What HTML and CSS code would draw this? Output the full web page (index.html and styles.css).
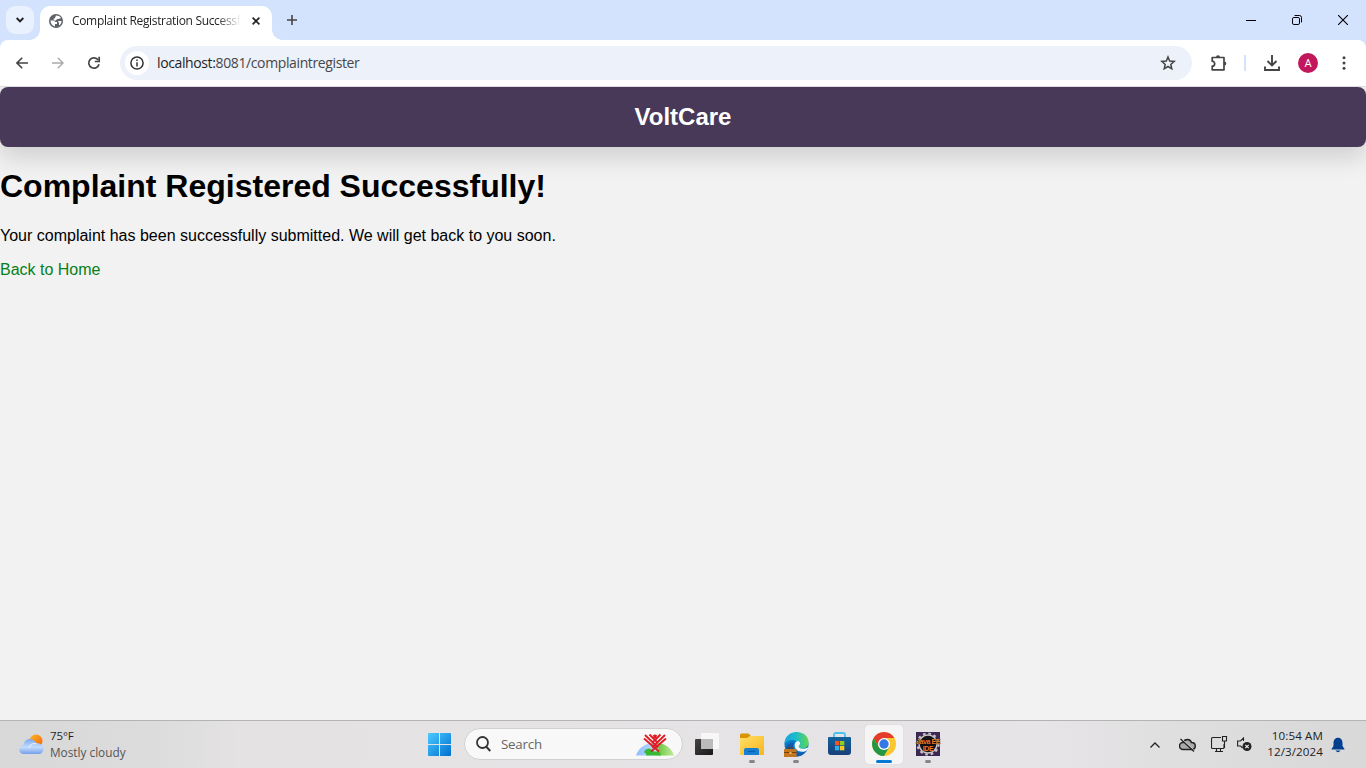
FILE: index.html
```html
<!DOCTYPE html>
<html lang="en">
<head>
<meta charset="utf-8">
<title>Complaint Registration Success</title>
<link rel="stylesheet" href="styles.css">
</head>
<body>
<div class="screen">
  <header class="tabs">
    <button class="tab-search"><svg width="8" height="6" viewBox="0 0 8 6"><path d="M.7 1L4 4.300 7.300 1" fill="none" stroke="#1f1f1f" stroke-width="1.900"/></svg></button>
    <div class="tab">
      <svg class="globe" width="14" height="14" viewBox="0 0 14 14"><circle cx="7" cy="7" r="7" fill="#5f6368"/><path d="M7 1.500c2 0 4 .7 5 2.500L9.500 5H8L7 6.500H5L4.500 5 6 4zM1.500 6.500h3L6.500 8H8v2H6v2.400C3.500 12 1.500 10 1.500 6.500zM9 7h3.500c0 2-1 3.500-2.500 4.500V9z" fill="#fff"/></svg>
      <span class="tab-title">Complaint Registration Successf</span>
      <svg width="8" height="8" viewBox="0 0 8 8"><path d="M.6.6l6.800 6.800M7.400.6L.6 7.400" stroke="#1f1f1f" stroke-width="1.600"/></svg>
    </div>
    <svg class="new-tab" width="10" height="10" viewBox="0 0 10 10"><path d="M5 0v10M0 5h10" stroke="#444" stroke-width="1.600"/></svg>
    <div class="window-controls">
      <span><svg width="10" height="10" viewBox="0 0 10 10"><path d="M0 5.500h10" stroke="#000"/></svg></span>
      <span><svg width="10" height="10" viewBox="0 0 10 10"><rect x=".5" y="2.500" width="7" height="7" rx="1.400" fill="none" stroke="#000"/><path d="M2.600.5h4.900a2 2 0 0 1 2 2v4.900" fill="none" stroke="#000"/></svg></span>
      <span><svg width="10" height="10" viewBox="0 0 10 10"><path d="M0 0l10 10M10 0L0 10" stroke="#000" stroke-width="1.100"/></svg></span>
    </div>
  </header>

  <div class="toolbar">
    <span class="nav-icon"><svg width="12" height="12" viewBox="0 0 12 12"><path d="M12 6H1.200M6.200.8L1 6l5.200 5.200" fill="none" stroke="#444" stroke-width="1.600"/></svg></span>
    <span class="nav-icon"><svg width="12" height="12" viewBox="0 0 12 12"><path d="M0 6h10.800M5.800.8L11 6l-5.200 5.200" fill="none" stroke="#aaa" stroke-width="1.400"/></svg></span>
    <span class="nav-icon"><svg width="14" height="14" viewBox="0 0 14 14"><path d="M12 8.200A5.200 5.200 0 1 1 11.200 4" fill="none" stroke="#444" stroke-width="1.700"/><path d="M12.200.8V5.500H7.800" fill="none" stroke="#444" stroke-width="1.700"/></svg></span>
    <div class="address">
      <span class="info"><svg width="14" height="14" viewBox="0 0 14 14"><circle cx="7" cy="7" r="6.100" fill="none" stroke="#333" stroke-width="1.500"/><path d="M7 6.200v4.200M7 3.400v1.500" stroke="#333" stroke-width="1.500"/></svg></span>
      <span class="url"><b>localhost:</b>8081/complaintregister</span>
      <svg class="star" width="16" height="16" viewBox="0 0 16 16"><path d="M8 2l1.700 4 4.500.4-3.400 3 1 4.400L8 11.500l-3.800 2.300 1-4.400-3.400-3 4.500-.4z" fill="none" stroke="#444" stroke-width="1.500"/></svg>
    </div>
    <div class="actions">
      <svg class="puzzle" width="18" height="18" viewBox="0 0 18 18"><path d="M2.200 3.500H14v12.300H2.200v-3.600c3.300 0 3.300-5 0-5z" fill="none" stroke="#444" stroke-width="1.700" stroke-linejoin="round"/><path d="M6 3.200a2 2 0 0 1 4 0zM14.300 7.500a2 2 0 0 1 0 4z" fill="#444"/></svg>
      <i class="divider"></i>
      <svg class="download" width="16" height="16" viewBox="0 0 16 16"><path d="M8 0v10M3.500 6L8 10.500 12.500 6M1 11.500V15h14v-3.500" fill="none" stroke="#444" stroke-width="1.900"/></svg>
      <span class="avatar">A</span>
      <svg class="more" width="4" height="14" viewBox="0 0 4 14"><g fill="#444"><circle cx="2" cy="1.700" r="1.500"/><circle cx="2" cy="7" r="1.500"/><circle cx="2" cy="12.300" r="1.500"/></g></svg>
    </div>
  </div>

  <main class="page">
    <div class="brand">VoltCare</div>
    <h1>Complaint Registered Successfully!</h1>
    <p>Your complaint has been successfully submitted. We will get back to you soon.</p>
    <a class="home">Back to Home</a>
  </main>

  <footer class="taskbar">
    <div class="weather">
      <svg width="25" height="21" viewBox="0 0 25 21"><defs><linearGradient id="sun" x2="1" y2="1"><stop stop-color="#fbb91e"/><stop offset="1" stop-color="#f4600f"/></linearGradient><linearGradient id="cloud" x2="0" y2="1"><stop stop-color="#7ba9ee"/><stop offset=".55" stop-color="#c4dcfc"/><stop offset="1" stop-color="#729feb"/></linearGradient></defs><circle cx="17" cy="7" r="6.500" fill="url(#sun)"/><path d="M5 20a4.500 4.500 0 0 1-.7-9C5.500 3.500 15 3 17 9.300c4-.7 7.500 1.700 7.500 5.400 0 3-2 5.300-5 5.300z" fill="url(#cloud)"/><path d="M10 14c1.500-4.500 5.500-5.500 8-4" fill="none" stroke="#dbe9ff" stroke-width="1.300"/></svg>
      <div><div class="temp">75°F</div><div class="sky">Mostly cloudy</div></div>
    </div>
    <div class="app start"><svg width="23" height="23" viewBox="0 0 23 23"><defs><linearGradient id="win" x2="1" y2="1"><stop stop-color="#4ccaff"/><stop offset="1" stop-color="#006fd0"/></linearGradient></defs><path d="M1 0h10v11H0V1q0-1 1-1zM12 0h10q1 0 1 1v10H12zM0 12h11v11H1q-1 0-1-1zM12 12h11v10q0 1-1 1H12z" fill="url(#win)"/></svg></div>
    <div class="search">
      <svg width="15" height="16" viewBox="0 0 15 16"><circle cx="6.500" cy="6.500" r="5.500" fill="none" stroke="#333" stroke-width="1.800"/><path d="M10.300 10.700l4 4.300" stroke="#333" stroke-width="2"/></svg>
      <span>Search</span>
      <svg class="heart" width="38" height="23" viewBox="0 0 38 23"><defs><linearGradient id="hill"><stop stop-color="#8fbdff"/><stop offset=".5" stop-color="#bddcf7"/><stop offset=".62" stop-color="#72ca4b"/><stop offset="1" stop-color="#c4ec9c"/></linearGradient></defs><path d="M0 22.500C5 5.500 33 5.500 38 22.500z" fill="url(#hill)"/><path d="M9 17q4-3 7 0t7 1l2 4.500H10q1-2-2-3z" fill="#38b934"/><path d="M8 5.500L23 18.500M30 5.500L15 18.500M9 2l13 12.500M29 2L16 14.500M13.500 1.500L22 10M24.500 1.500L16 10M17.500 2l3 3M20.500 2l-3 3" fill="none" stroke="#df1c24" stroke-width="1.900"/></svg>
    </div>
    <div class="app"><svg class="task-view" width="24" height="24" viewBox="0 0 24 24"><defs><linearGradient id="dark" x2="1" y2="1"><stop stop-color="#454545"/><stop offset="1" stop-color="#171717"/></linearGradient></defs><rect x="0" y="7" width="18" height="16" rx="1" fill="url(#dark)"/><rect x="6" y="1" width="18" height="16" rx="1" fill="#f7f7f7"/><path d="M6 7h12v10H7q-1 0-1-1z" fill="#bbb"/></svg></div>
    <div class="app running"><svg width="24" height="23" viewBox="0 0 24 23"><defs><linearGradient id="folder" x2="1" y2="1"><stop stop-color="#ffdf66"/><stop offset="1" stop-color="#f8b51e"/></linearGradient></defs><path d="M0 2q0-1.500 1.500-1.500h7L11 3h11q2 0 2 2v7H0z" fill="#d89400"/><path d="M0 5h7l3-2h13q1 0 1 1v17q0 1-1 1H1q-1 0-1-1z" fill="url(#folder)"/><path d="M4 22v-5q0-2 2-2h11q2 0 2 2v5z" fill="#167fd3"/><path d="M8 18.500h7" stroke="#075da8" stroke-width="1.200"/></svg></div>
    <div class="app running"><svg width="25" height="25" viewBox="0 0 25 25"><defs><linearGradient id="edge"><stop stop-color="#16a4df"/><stop offset=".5" stop-color="#21bdc7"/><stop offset="1" stop-color="#62d84a"/></linearGradient></defs><circle cx="12.500" cy="12.500" r="12" fill="#087ccc"/><path d="M.5 12C1-4 24-3 24.500 10c.3 5-4 7.500-9.500 6.500-2-.5-2-1.500-1-2.500C16 8 5 5 .5 12z" fill="url(#edge)"/><path d="M10 11c-4 6 3 13 12 8-5 8-17 7-20-1-1-5 4-8 8-7z" fill="#125aaa"/><path d="M13.500 9c4.500 1 2 4 1 5.500 1 3 7 3 10 .5-1 5-6 5.500-10 4-5-2-5-9-1-10z" fill="#f4f6f8"/><rect x="0" y="17" width="12.500" height="8" rx=".5" fill="#c4751f"/><path d="M4 17v-1.200h5V17M0 20.500h12.500" fill="none" stroke="#673b12" stroke-width=".9"/><path d="M5.500 20h2v2h-2z" fill="#f9bd4b"/></svg></div>
    <div class="app"><svg class="task-view" width="23" height="24" viewBox="0 0 23 24"><defs><linearGradient id="store" x2="0" y2="1"><stop stop-color="#12629b"/><stop offset="1" stop-color="#183f78"/></linearGradient></defs><path d="M6 6V3q0-2 2-2h7q2 0 2 2v3" fill="none" stroke="#49c3ee" stroke-width="1.800"/><path d="M0 6q0-1 1-1h21q1 0 1 1v14q0 3-3 3H3q-3 0-3-3z" fill="url(#store)"/><path d="M7 9h4.300v4.300H7z" fill="#f35325"/><path d="M12 9h4.300v4.300H12z" fill="#8fd01c"/><path d="M7 14h4.300v4.300H7z" fill="#27b1f4"/><path d="M12 14h4.300v4.300H12z" fill="#ffc51d"/></svg></div>
    <div class="app active"><svg width="24" height="24" viewBox="0 0 24 24"><circle cx="12" cy="12" r="12" fill="#fbc72f"/><path d="M1.610 6A12 12 0 0 1 22.390 6H12L6.800 15z" fill="#e33b2e"/><path d="M1.610 6A12 12 0 0 0 12 24L17.200 15 12 17.500 6.800 15z" fill="#249747"/><circle cx="12" cy="12" r="6" fill="#fff"/><circle cx="12" cy="12" r="4.700" fill="#3478e5"/></svg></div>
    <div class="app running"><div class="ide"><svg width="24" height="24" viewBox="0 0 24 24"><circle cx="12" cy="12" r="9" fill="#171419" stroke="#c8c2c4" stroke-width="1.500"/><circle cx="12" cy="12" r="10.500" fill="none" stroke="#c8c2c4" stroke-width="2.200" stroke-dasharray="2.700 2.800"/></svg><span>Java EE<br>IDE</span></div></div>

    <div class="tray">
      <svg class="chevron" width="10" height="6" viewBox="0 0 10 6"><path d="M.5 5.500L5 1l4.500 4.500" fill="none" stroke="#222" stroke-width="1.300"/></svg>
      <svg class="cloud-off" width="17" height="14" viewBox="0 0 17 14"><path d="M4 11.500a3.500 3.500 0 0 1 0-7c2-4 7-4 8.500 0 5 0 5 7 0 7z" fill="#aaa" stroke="#222" stroke-width="1.500"/><path d="M3.200 1.300l11.500 10.500" stroke="#e0e0e0" stroke-width="1"/><path d="M1.500 1l13.500 12.500" stroke="#222" stroke-width="1.300"/></svg>
      <svg class="network" width="17" height="17" viewBox="0 0 17 17"><path d="M10 1.500H2q-1.500 0-1.500 1.500v8.500q0 1 1 1H12q1 0 1-1V8M5.500 12.500v3M9.500 12.500v3M4 15.500h8M11.500.5h4v4.500h-4zM13.500 5v7" fill="none" stroke="#222" stroke-width="1.100"/></svg>
      <svg class="sound" width="15" height="15" viewBox="0 0 15 15"><path d="M6.500 4V1L3.500 4H.6v5h3l2 2" fill="none" stroke="#222" stroke-width="1.100"/><circle cx="10" cy="9.500" r="4.500" fill="#222"/><path d="M8.300 7.800l3.400 3.400M11.700 7.800l-3.400 3.400" stroke="#eee" stroke-width="1.200"/></svg>
      <div class="clock"><div>10:54 AM</div><div class="date">12/3/2024</div></div>
      <svg class="bell" width="14" height="16" viewBox="0 0 14 16"><path d="M.5 12l2-3V6c0-7 9-7 9 0v3l2 3v.5H.5zM4.500 13.500h5Q7 17 4.500 13.500z" fill="#00408f"/></svg>
    </div>
  </footer>
</div>
</body>
</html>
```
FILE: styles.css
```css
* { box-sizing: border-box; }
body { margin: 0; overflow: hidden; font-family: "Liberation Sans", Arial, sans-serif; }
svg { display: block; flex: none; }
.screen { width: 1366px; height: 768px; display: flex; flex-direction: column; background: #f2f2f2; }
.tabs { height: 40px; flex: none; display: flex; align-items: center; background: #d3e2fd; box-shadow: 0 8px #d3e2fd; padding-left: 6px; font-family: "Open Sans", "Noto Sans", sans-serif; }
.tab-search { width: 28px; height: 28px; border: 0; padding: 0; border-radius: 9px; background: #e9f0fe; display: grid; place-items: center; }
.tab { position: relative; z-index: 2; align-self: flex-end; width: 232px; height: 34px; margin-left: 6px; padding: 0 12px 5px 9px; border-radius: 10px 10px 0 0; background: #fff; display: flex; align-items: center; }
.tab::before, .tab::after { content: ""; position: absolute; bottom: 0; width: 10px; height: 10px; }
.tab::before { right: 100%; background: radial-gradient(circle at 0 0, transparent 9.5px, #fff 10px); }
.tab::after { left: 100%; background: radial-gradient(circle at 100% 0, transparent 9.5px, #fff 10px); }
.tab-title { width: 168px; margin: 0 12px 0 9px; white-space: nowrap; font-size: 12px; letter-spacing: -.33px; line-height: 18px; color: #1f1f1f; mask-image: linear-gradient(to right, #000 145px, transparent 169px); }
.new-tab { margin-left: 15px; }
.window-controls { margin-left: auto; display: flex; }
.window-controls span { width: 46px; height: 40px; display: grid; place-items: center; }
.toolbar { position: relative; height: 47px; flex: none; padding: 0 0 1px 4px; display: flex; align-items: center; background: #fff; border-bottom: 1px solid #dcdcdc; border-radius: 8px 8px 0 0; }
.nav-icon { width: 36px; height: 36px; display: grid; place-items: center; }
.address { width: 1072px; height: 34px; margin-left: 8px; border-radius: 17px; background: #ecf1fa; display: flex; align-items: center; padding: 0 16px 0 5px; font-family: "Open Sans", "Noto Sans", sans-serif; }
.info { width: 24px; height: 24px; background: #fff; border-radius: 50%; display: grid; place-items: center; }
.url { margin-left: 8px; color: #474747; font-size: 14px; letter-spacing: -.38px; }
.url b { font-weight: 400; color: #1f1f1f; }
.star { margin-left: auto; }
.actions { display: flex; align-items: center; }
.puzzle { margin-left: 18px; }
.divider { width: 2px; height: 16px; margin-left: 16px; background: #d3e2fd; }
.download { margin-left: 18px; }
.avatar { width: 20px; height: 20px; margin-left: 18px; border-radius: 50%; background: #c2185b; color: #fff; font: 11px/21px Roboto, sans-serif; text-align: center; }
.more { margin-left: 24px; }
.page { flex: 1; min-height: 0; }
.brand { height: 60px; border-radius: 8px; background: #483959; color: #fff; font-size: 24px; font-weight: 700; line-height: 60px; text-align: center; box-shadow: 0 10px 24px rgba(0,0,0,.15); }
h1 { margin: 21px 0 0; font-size: 32px; line-height: 37px; }
p { margin: 22px 0 0; font-size: 16px; line-height: 18px; }
.home { display: block; margin-top: 16px; color: #068017; line-height: 18px; }
.taskbar { height: 48px; flex: none; border-top: 1px solid #b4b4b4; background: linear-gradient(90deg, #d8d8d8 0, #dcdcdc 150px, #e4e2e3 240px, #e6e4e6 1050px, #dadada 1300px, #d9d9d9); display: flex; align-items: center; font-family: "Open Sans", "Noto Sans", sans-serif; }
.weather { width: 417px; padding-left: 19px; display: flex; align-items: center; line-height: 16px; color: #555; }
.weather > div { margin-left: 6px; padding-bottom: 2px; }
.weather .temp { color: #1f1f1f; font-size: 11.5px; letter-spacing: -.1px; }
.weather .sky { font-size: 11.8px; }
.app { position: relative; width: 44px; height: 47px; display: grid; place-items: center; }
.app > * { position: relative; }
.start { margin-right: 3px; }
.search { width: 219px; height: 32px; margin: 0 3px 1px 0; border: 1px solid #d1d1d1; border-radius: 16px; background: #f8f8f8; display: flex; align-items: center; padding: 0 8px 0 11px; font-size: 13.3px; letter-spacing: -.2px; color: #666; }
.search span { margin-left: 10px; padding-bottom: 1px; }
.heart { margin-left: auto; }
.running::after, .active::after { content: ""; position: absolute; bottom: 5px; left: 50%; transform: translateX(-50%); width: 6px; height: 3px; border-radius: 2px; background: #858585; }
.active::before { content: ""; position: absolute; inset: 4px 3px 4px; border-radius: 4px; background: #f5f5f5; box-shadow: 0 0 1px #ccc; }
.active::after { width: 16px; background: #0078d4; }
.app > svg, .ide { margin-bottom: 1px; }
.app > .task-view { margin-right: 2px; }
.start > svg { margin-bottom: 0; }
.ide { width: 24px; height: 24px; background: #3b2753; }
.ide span { position: absolute; inset: 6px -2px 0; color: #ef7d25; font: 700 7px/7px "Liberation Sans", sans-serif; letter-spacing: -.4px; white-space: nowrap; text-align: center; text-shadow: 0 0 1px #000, 0 0 1px #000; }
.tray { margin-left: auto; margin-right: 21px; display: flex; align-items: center; }
.cloud-off { margin-left: 19px; }
.network { margin-left: 15px; }
.sound { margin-left: 9px; }
.clock { width: 57px; margin-left: 14px; padding-bottom: 2px; text-align: right; font-size: 11.6px; line-height: 16px; letter-spacing: .1px; white-space: nowrap; color: #222; }
.bell { margin-left: 8px; }
```
